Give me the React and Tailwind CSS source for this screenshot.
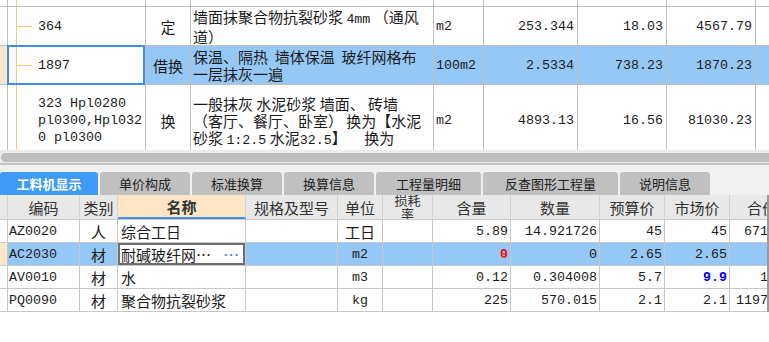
import React from "react";

const CJK = "font-['Noto_Sans_CJK_SC',sans-serif]";
const MONO = "font-['Liberation_Mono','Noto_Sans_CJK_SC',monospace] text-[13.33px]";

// ascii runs go to the mono face, like the original grid font
function Mix({ text }) {
  const parts = text.split(/([A-Za-z0-9.:,]+)/);
  return parts.map((p, i) =>
    i % 2 === 1 ? (
      <span key={i} className={MONO}>{p}</span>
    ) : (
      <span key={i}>{p}</span>
    )
  );
}

const topRows = [
  {
    h: "h-[39px]",
    stub: true,
    code: ["364"],
    type: "定",
    name: ["墙面抹聚合物抗裂砂浆 4mm （通风", "道）"],
    unit: "m2",
    qty: "253.344",
    price: "18.03",
    total: "4567.79",
  },
  {
    h: "h-[39px]",
    stub: true,
    sel: true,
    code: ["1897"],
    type: "借换",
    name: ["保温、隔热  墙体保温  玻纤网格布", "一层抹灰一遍"],
    unit: "100m2",
    qty: "2.5334",
    price: "738.23",
    total: "1870.23",
  },
  {
    h: "h-[72px]",
    tall: true,
    code: ["323 Hpl0280", "pl0300,Hpl032", "0 pl0300"],
    type: "换",
    name: [
      "一般抹灰 水泥砂浆 墙面、 砖墙",
      "（客厅、餐厅、卧室） 换为【水泥",
      "砂浆 1:2.5 水泥32.5】\u3000   换为",
      "【水泥砂浆 1:2.5 水泥32.5】",
    ],
    unit: "m2",
    qty: "4893.13",
    price: "16.56",
    total: "81030.23",
  },
];

const bottomRows = [
  { code: "AZ0020", type: "人", name: "综合工日", unit: "工日", qty: "5.89", num: "14.921726", bp: "45", mp: "45", total: "671.48" },
  { sel: true, code: "AC2030", type: "材", name: "耐碱玻纤网…", unit: "m2", qty: "0", qtyRed: true, num: "0", bp: "2.65", mp: "2.65", total: "0" },
  { code: "AV0010", type: "材", name: "水", unit: "m3", qty: "0.12", num: "0.304008", bp: "5.7", mp: "9.9", mpBlue: true, total: "1.73" },
  { code: "PQ0090", type: "材", name: "聚合物抗裂砂浆", unit: "kg", qty: "225", num: "570.015", bp: "2.1", mp: "2.1", total: "1197.03" },
];

const tabs = [
  { label: "工料机显示", w: "w-[98px]", active: true },
  { label: "单价构成", w: "w-[90px]" },
  { label: "标准换算", w: "w-[90px]" },
  { label: "换算信息", w: "w-[90px]" },
  { label: "工程量明细", w: "w-[105px]" },
  { label: "反查图形工程量", w: "w-[135px]" },
  { label: "说明信息", w: "w-[90px]" },
];

const cell = "shrink-0 border-r border-[#c0c0c0] flex items-center";

const TopRow = ({ r }) => {
  const bg = r.sel ? "bg-[#96c8f6]" : "";
  return (
    <div className={`flex ${r.h} border-b border-[#c0c0c0]`}>
      <div className={`w-[8px] shrink-0 border-r border-[#c0c0c0] ${r.sel ? "bg-[#fde7c6]" : ""}`} />
      <div className="w-[138px] shrink-0 border-r border-[#c0c0c0] flex relative">
        <div className="w-[8px] shrink-0" />
        <div className="w-[16px] shrink-0 border-l border-[#fcc77a] flex items-center">
          {r.stub && <div className="h-px w-full bg-[#fcc77a]" />}
        </div>
        <div className={`pl-[6px] flex flex-col justify-center whitespace-pre leading-[17px] ${MONO}`}>
          {r.code.map((c) => (
            <div key={c}>{c}</div>
          ))}
        </div>
        {r.sel && (
          <div className="absolute -left-px -top-px right-0 -bottom-px border-2 border-[#3d8df2]" />
        )}
      </div>
      <div className={`w-[45px] justify-center ${cell} ${bg}`}>{r.type}</div>
      <div
        className={`w-[243px] pl-[2px] overflow-hidden flex-col justify-center ${cell} ${bg} ${
          r.tall ? "!items-start !justify-start pt-[10px]" : "!items-start"
        }`}
      >
        {r.name.map((n) => (
          <div key={n} className="whitespace-pre">
            <Mix text={n} />
          </div>
        ))}
      </div>
      <div className={`w-[50px] pl-[2px] ${cell} ${bg} ${MONO}`}>{r.unit}</div>
      <div className={`w-[94px] justify-end pr-[3px] ${cell} ${bg} ${MONO}`}>{r.qty}</div>
      <div className={`w-[89px] justify-end pr-[3px] ${cell} ${bg} ${MONO}`}>{r.price}</div>
      <div className={`w-[89px] justify-end pr-[3px] ${cell} ${bg} ${MONO}`}>{r.total}</div>
      <div className={`w-[40px] ${cell} ${bg}`} />
    </div>
  );
};

const bcell = "shrink-0 border-r border-[#c8c8c8] flex items-center whitespace-nowrap";

const BottomRow = ({ r }) => {
  const bg = r.sel ? "bg-[#96c8f6]" : "bg-white";
  return (
    <div className="flex h-[23px] border-b border-[#c8c8c8]">
      <div className={`w-[8px] ${bcell} ${r.sel ? "bg-[#fde7c6]" : "bg-white"}`} />
      <div className={`w-[72px] pl-[1px] ${bcell} ${bg} ${MONO}`}>{r.code}</div>
      <div className={`w-[38px] justify-center ${bcell} ${bg}`}>{r.type}</div>
      {r.sel ? (
        <div className={`w-[128px] pl-[3px] pr-[5px] justify-between overflow-hidden bg-white shadow-[inset_0_0_0_2px_#6f6f6f] ${bcell}`}>
          <span>{r.name}</span>
          <span className="font-['Liberation_Sans',sans-serif] text-[#3a86dc] font-bold text-[13px] tracking-[1px]">···</span>
        </div>
      ) : (
        <div className={`w-[128px] pl-[3px] overflow-hidden ${bcell} ${bg}`}>{r.name}</div>
      )}
      <div className={`w-[92px] ${bcell} ${bg}`} />
      <div className={`w-[45px] justify-center ${bcell} ${bg}`}>
        <Mix text={r.unit} />
      </div>
      <div className={`w-[50px] ${bcell} ${bg}`} />
      <div
        className={`w-[78px] justify-end pr-[2px] ${bcell} ${bg} ${MONO} ${
          r.qtyRed ? "text-[#ff0000] font-bold" : ""
        }`}
      >
        {r.qty}
      </div>
      <div className={`w-[89px] justify-end pr-[2px] ${bcell} ${bg} ${MONO}`}>{r.num}</div>
      <div className={`w-[65px] justify-end pr-[2px] ${bcell} ${bg} ${MONO}`}>{r.bp}</div>
      <div
        className={`w-[65px] justify-end pr-[2px] ${bcell} ${bg} ${MONO} ${
          r.mpBlue ? "text-[#0000ff] font-bold" : ""
        }`}
      >
        {r.mp}
      </div>
      <div className={`w-[65px] justify-end pr-[2px] ${bcell} ${bg} ${MONO}`}>{r.total}</div>
    </div>
  );
};

const headCell = "shrink-0 border-r border-[#d2d2d2] flex items-center justify-center";

export default function App() {
  return (
    <div className={`w-[769px] h-[342px] overflow-hidden bg-white text-[15px] leading-[17px] text-[#1b1b1b] ${CJK}`}>
      {/* upper grid, scrolled */}
      <div className="h-[150px] overflow-hidden">
        <div className="flex h-[7px] border-b border-[#c0c0c0]">
          <div className="w-[8px] shrink-0 border-r border-[#c0c0c0]" />
          <div className="w-[138px] shrink-0 border-r border-[#c0c0c0] flex">
            <div className="w-[8px] shrink-0" />
            <div className="w-[16px] shrink-0 border-l border-[#fcc77a]" />
          </div>
          <div className="w-[45px] shrink-0 border-r border-[#c0c0c0]" />
          <div className="w-[243px] shrink-0 border-r border-[#c0c0c0]" />
          <div className="w-[50px] shrink-0 border-r border-[#c0c0c0]" />
          <div className="w-[94px] shrink-0 border-r border-[#c0c0c0]" />
          <div className="w-[89px] shrink-0 border-r border-[#c0c0c0]" />
          <div className="w-[89px] shrink-0 border-r border-[#c0c0c0]" />
        </div>
        {topRows.map((r) => (
          <TopRow key={r.code[0]} r={r} />
        ))}
      </div>

      {/* horizontal scrollbar */}
      <div className="h-[13px] bg-[#ececec] pt-[3px] pl-[1px]">
        <div className="h-[9px] rounded-l-full bg-[#bdbdbd]" />
      </div>
      <div className="h-[2px] bg-[#c4c4c4]" />

      {/* tabs */}
      <div className="h-[30px] bg-[#f0f0f0] pt-[7px] flex gap-[2px] text-[13px]">
        {tabs.map((t) => (
          <div
            key={t.label}
            className={`${t.w} h-[23px] rounded-t-[3px] flex items-center justify-center ${
              t.active ? "bg-[#3f9cf6] text-white font-bold" : "bg-[#c0c0c0] text-[#222]"
            }`}
          >
            {t.label}
          </div>
        ))}
      </div>

      {/* lower grid */}
      <div className="flex">
        <div className="w-[767px] overflow-hidden">
          <div className="flex h-[25px] border-b border-[#c8c8c8] bg-[#e8e8e8] text-[#333]">
            <div className={`w-[8px] ${headCell}`} />
            <div className={`w-[72px] ${headCell}`}>编码</div>
            <div className={`w-[38px] ${headCell}`}>类别</div>
            <div className={`w-[128px] ${headCell} bg-[#fde6c6] font-bold border-b-2 !border-b-[#3f95f0]`}>名称</div>
            <div className={`w-[92px] ${headCell}`}>规格及型号</div>
            <div className={`w-[45px] ${headCell}`}>单位</div>
            <div className={`w-[50px] ${headCell} overflow-hidden text-[13px] leading-[14px] text-center`}>
              <div>
                损耗
                <br />
                率
              </div>
            </div>
            <div className={`w-[78px] ${headCell}`}>含量</div>
            <div className={`w-[89px] ${headCell}`}>数量</div>
            <div className={`w-[65px] ${headCell}`}>预算价</div>
            <div className={`w-[65px] ${headCell}`}>市场价</div>
            <div className={`w-[65px] ${headCell}`}>合价</div>
          </div>
          {bottomRows.map((r) => (
            <BottomRow key={r.code} r={r} />
          ))}
        </div>
        <div className="w-[2px] bg-[#9a9a9a]" />
      </div>
    </div>
  );
}
